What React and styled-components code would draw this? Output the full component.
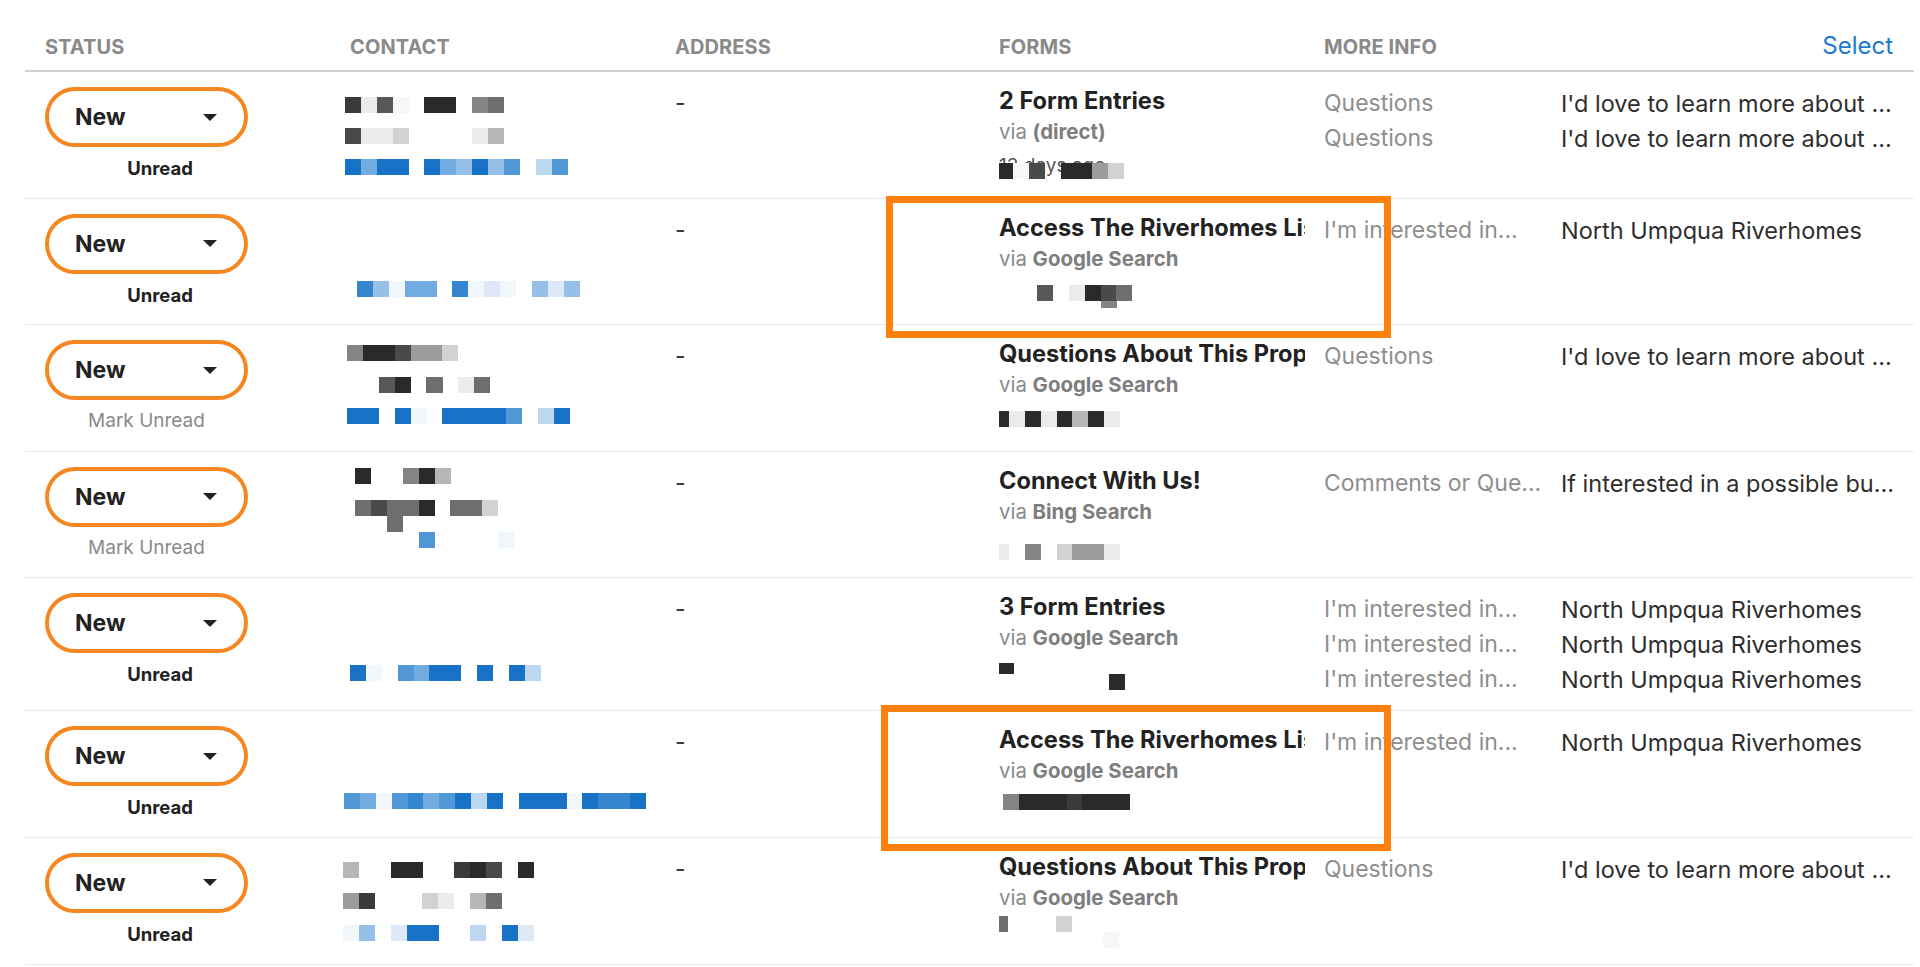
import React from 'react';
import styled, { createGlobalStyle, css } from 'styled-components';

const GlobalStyle = createGlobalStyle`
  *, *::before, *::after { box-sizing: border-box; }
  body {
    margin: 0;
    background: #ffffff;
    font-family: Inter, "Liberation Sans", sans-serif;
  }
`;

// colour keys for the pixelated (redacted) blocks
const PALETTE = {
  '0': '#2a2a2a', '1': '#3a3a3a', '2': '#4a4a4a', '3': '#585858', '4': '#6e6e6e',
  '5': '#848484', '6': '#9c9c9c', '7': '#b6b6b6', '8': '#d2d2d2', '9': '#ebebeb', v: '#f7f7f7',
  A: '#1873c8', B: '#3585cf', C: '#5097d6', D: '#72abdf', E: '#96c0e7',
  F: '#bcd7f0', G: '#dde9f7', H: '#f2f7fc',
};

const CELL = 15.9;

const columns = css`
  display: grid;
  grid-template-columns: 305px 325px 324px 325px 237px 1fr;
  padding: 0 21px 0 20px;
`;

const Page = styled.div`
  position: relative;
  width: 1920px;
  min-height: 967px;
`;

const Table = styled.div`
  margin-left: 25px;
  width: 1889px;
`;

const HeaderRow = styled.div`
  ${columns};
  height: 72px;
  align-items: end;
  padding-bottom: 11px;
  border-bottom: 2px solid #d2d2d2;
`;

const HeadCell = styled.div`
  font-size: 20px;
  line-height: 24px;
  font-weight: 700;
  text-transform: uppercase;
  letter-spacing: 0.1px;
  color: #8a8a8a;
  text-align: ${(p) => (p.$right ? 'right' : 'left')};
`;

const SelectLink = styled.span`
  font-size: 24px;
  font-weight: 400;
  text-transform: none;
  color: #1b79d1;
  letter-spacing: 0;
`;

const Row = styled.div`
  ${columns};
  min-height: 126.6px;
  align-items: start;
  border-bottom: 1px solid #e8e8e8;
`;

const StatusCell = styled.div`
  padding-top: 15px;
  width: 203px;
`;

const Pill = styled.div`
  display: flex;
  align-items: center;
  justify-content: space-between;
  width: 203px;
  height: 60px;
  padding: 0 27px 0 26px;
  border: 4px solid #f6861f;
  border-radius: 30px;
  font-size: 23px;
  font-weight: 700;
  color: #222;
`;

const StatusLabel = styled.div`
  margin-top: 9px;
  line-height: 24px;
  text-align: center;
  padding-left: ${(p) => (p.$unread ? 27 : 0)}px;
  font-size: ${(p) => (p.$unread ? 18.5 : 19)}px;
  font-weight: ${(p) => (p.$unread ? 700 : 400)};
  color: ${(p) => (p.$unread ? '#222' : '#8a8a8a')};
`;

const MosaicSvg = styled.svg`
  display: block;
  margin-left: ${(p) => p.$x}px;
  margin-top: ${(p) => p.$y}px;
  shape-rendering: crispEdges;
`;

const Overlay = styled.div`
  position: absolute;
  left: ${(p) => p.$x}px;
  top: ${(p) => p.$y}px;
`;

const TextCell = styled.div`
  padding-top: 14px;
  font-size: 23px;
  line-height: 35px;
  color: #333;
`;

const FormsCell = styled.div`
  padding-top: 14px;
  margin-right: 19px;
  min-width: 0;
  overflow: hidden;
  white-space: nowrap;
`;

const FormTitle = styled.div`
  font-size: 23.6px;
  line-height: 30px;
  font-weight: 700;
  color: #222;
`;

const Via = styled.div`
  font-size: 20.4px;
  line-height: 32px;
  color: #8a8a8a;

  b {
    font-weight: 700;
    color: #7e7e7e;
  }
`;

const DaysLine = styled.div`
  position: relative;
  padding-top: 4px;
  font-size: 19px;
  line-height: 28px;
  color: #555;
`;

const InfoCell = styled.div`
  padding: 14px 0 13px;
  font-size: ${(p) => (p.$muted ? 23 : 23.5)}px;
  line-height: 35px;
  white-space: nowrap;
  overflow: hidden;
  color: ${(p) => (p.$muted ? '#8e8e8e' : '#2e2e2e')};
`;

const Highlight = styled.div`
  position: absolute;
  left: ${(p) => p.$x}px;
  top: ${(p) => p.$y}px;
  width: ${(p) => p.$w}px;
  height: ${(p) => p.$h}px;
  border: 7px solid #ff800c;
  pointer-events: none;
`;

const Mosaic = ({ rows, x = 0, y = 0 }) => {
  const width = Math.max(...rows.map(([, s]) => s.length)) * CELL;
  const height = Math.max(...rows.map(([dy, , h = 16]) => dy + h));
  return (
    <MosaicSvg $x={x} $y={y} width={width} height={height} viewBox={`0 0 ${width} ${height}`}>
      {rows.map(([dy, s, h = 16]) =>
        s.split('').map((ch, i) =>
          PALETTE[ch] ? (
            <rect key={`${dy}-${i}`} x={i * CELL} y={dy} width={CELL + 0.2} height={h} fill={PALETTE[ch]} />
          ) : null
        )
      )}
    </MosaicSvg>
  );
};

const Arrow = () => (
  <svg width="14" height="7" viewBox="0 0 14 7">
    <polygon points="0,0 14,0 7,7" fill="#222" />
  </svg>
);

const LOVE = "I'd love to learn more about ...";
const INTEREST = ["I'm interested in...", 'North Umpqua Riverhomes'];

const leads = [
  {
    unread: true,
    contact: { x: -5, y: 25, rows: [[0, '193v.00.54'], [31, '2998....97'], [62, 'ADAA.ADEAEC.FC']] },
    title: '2 Form Entries',
    source: '(direct)',
    days: '13 days ago',
    info: [['Questions', LOVE], ['Questions', LOVE]],
  },
  {
    unread: true,
    contact: { x: 7, y: 82, rows: [[0, 'BEHDD.BHGH.EGE']] },
    title: 'Access The Riverhomes Listing',
    source: 'Google Search',
    extra: { x: 38, y: 10, rows: [[0, '3.9024'], [16, '....5', 7]] },
    info: [INTEREST],
  },
  {
    unread: false,
    contact: { x: -3, y: 20, rows: [[0, '5002668'], [32, '..30.4.94'], [63, 'AA.AH.AAAAC.FA']] },
    title: 'Questions About This Property',
    source: 'Google Search',
    extra: { x: -6, y: 10, rows: [[0, '09090709']] },
    info: [['Questions', LOVE]],
  },
  {
    unread: false,
    contact: { x: 5, y: 16, rows: [[0, '0..507'], [32, '42440.448'], [48, '..4'], [64, '....C....H']] },
    title: 'Connect With Us!',
    source: 'Bing Search',
    extra: { x: -6, y: 16, rows: [[0, '9.5.8669']] },
    info: [['Comments or Que...', 'If interested in a possible bu...']],
  },
  {
    unread: true,
    contact: { x: 0, y: 87, rows: [[0, 'AH.CDAA.A.AF']] },
    title: '3 Form Entries',
    source: 'Google Search',
    extra: { x: -1, y: 9, rows: [[0, '0', 11], [11, '.......0']] },
    info: [INTEREST, INTEREST, INTEREST],
  },
  {
    unread: true,
    contact: { x: -6, y: 82, rows: [[0, 'CDHCBDCAFA.AAAHABBA']] },
    title: 'Access The Riverhomes Listing',
    source: 'Google Search',
    extra: { x: 4, y: 7, rows: [[0, '50001000']] },
    info: [INTEREST],
  },
  {
    unread: true,
    contact: { x: -7, y: 24, rows: [[0, '7..00..102.0'], [31, '61...89.74'], [63, 'HE.GAA..F.AG']] },
    title: 'Questions About This Property',
    source: 'Google Search',
    extra: { x: -7, y: 2, rows: [[0, '4...8'], [16, '.......v']] },
    info: [['Questions', LOVE]],
  },
];

const LeadRow = ({ lead }) => (
  <Row>
    <StatusCell>
      <Pill>
        New
        <Arrow />
      </Pill>
      <StatusLabel $unread={lead.unread}>{lead.unread ? 'Unread' : 'Mark Unread'}</StatusLabel>
    </StatusCell>
    <div>
      <Mosaic {...lead.contact} />
    </div>
    <TextCell>-</TextCell>
    <FormsCell>
      <FormTitle>{lead.title}</FormTitle>
      <Via>
        via <b>{lead.source}</b>
      </Via>
      {lead.days && (
        <DaysLine>
          {lead.days}
          <Overlay $x={-2} $y={15}>
            <Mosaic rows={[[0, '0v2.0068']]} />
          </Overlay>
        </DaysLine>
      )}
      {lead.extra && <Mosaic {...lead.extra} />}
    </FormsCell>
    <InfoCell $muted>
      {lead.info.map(([label], i) => (
        <div key={i}>{label}</div>
      ))}
    </InfoCell>
    <InfoCell>
      {lead.info.map(([, text], i) => (
        <div key={i}>{text}</div>
      ))}
    </InfoCell>
  </Row>
);

export default function App() {
  return (
    <Page>
      <GlobalStyle />
      <Table>
        <HeaderRow>
          <HeadCell>Status</HeadCell>
          <HeadCell>Contact</HeadCell>
          <HeadCell>Address</HeadCell>
          <HeadCell>Forms</HeadCell>
          <HeadCell>More Info</HeadCell>
          <HeadCell $right>
            <SelectLink>Select</SelectLink>
          </HeadCell>
        </HeaderRow>
        {leads.map((lead, i) => (
          <LeadRow key={i} lead={lead} />
        ))}
      </Table>
      <Highlight $x={886} $y={196} $w={505} $h={142} />
      <Highlight $x={881} $y={705} $w={510} $h={146} />
    </Page>
  );
}
